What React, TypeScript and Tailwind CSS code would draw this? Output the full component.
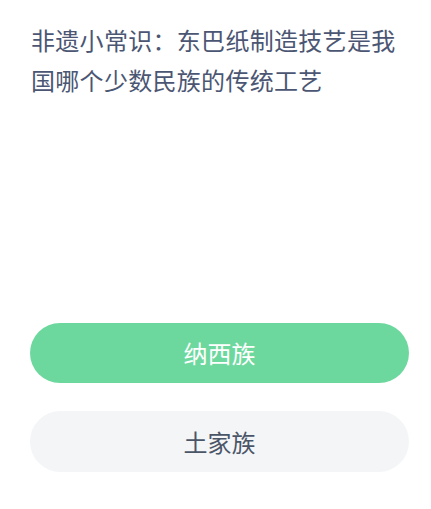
export default function App() {
  return (
    <div
      className="w-[431px] h-[509px] bg-white flex flex-col"
      style={{ fontFamily: '"Noto Sans CJK SC", "Noto Sans", sans-serif' }}
    >
      <p className="pl-[31px] pr-[22px] pt-[20px] text-[24px] leading-[40px] tracking-[0.3px] text-[#4b5673]">
        非遗小常识：东巴纸制造技艺是我国哪个少数民族的传统工艺
      </p>
      <div className="flex-1" />
      <div className="flex flex-col gap-[28px] pl-[30px] pr-[22px] pb-[37px]">
        <button className="h-[60px] rounded-full bg-[#6dd89e] text-white text-[24px]">
          纳西族
        </button>
        <button className="h-[61px] rounded-full bg-[#f3f5f7] text-[#4b5568] text-[24px]">
          土家族
        </button>
      </div>
    </div>
  )
}
